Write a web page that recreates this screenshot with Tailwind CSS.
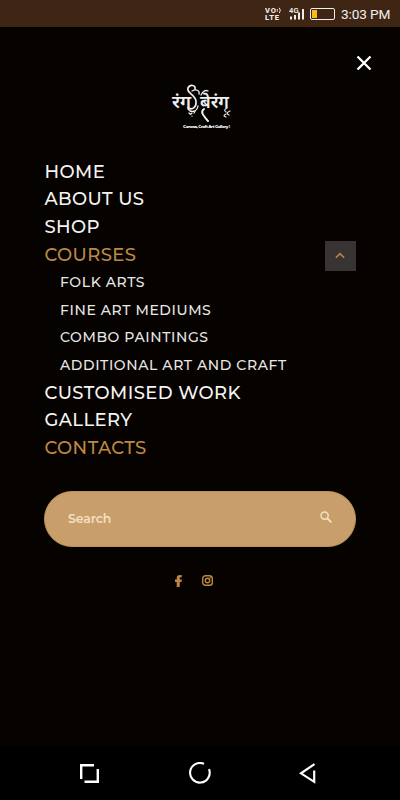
<!DOCTYPE html>
<html lang="en">
<head>
    <meta charset="UTF-8">
    <meta name="viewport" content="width=device-width, initial-scale=1.0">
    <title>Rang Berang</title>
    <script src="https://cdn.jsdelivr.net/npm/@tailwindcss/browser@4"></script>
</head>
<body class="bg-[#060200] font-['Montserrat','Inter',sans-serif] text-[#f5f4f3]">
    <div class="flex flex-col w-[400px] h-[800px] overflow-hidden">

        <!-- status bar -->
        <header class="flex h-[27px] shrink-0 items-center justify-end bg-[#3f2614] pr-[10px] font-['Roboto',sans-serif] text-[#f0eeec]">
            <svg class="w-[17px] h-[14px]" viewBox="0 0 17 14" fill="currentColor" font-size="7.5" font-weight="800">
                <text x="0" y="6" textLength="11">VO</text>
                <text x="0" y="13.300" textLength="14">LTE</text>
                <path fill="none" stroke="currentColor" d="M12 2q1 1.400 0 2.800M14.300 .8q2 2.600 0 5.200"/>
            </svg>
            <svg class="ml-[7px] w-[16px] h-[14px]" viewBox="0 0 16 14" fill="currentColor">
                <text x="0" y="6" font-size="7.5" font-weight="600" textLength="9.5">4G</text>
                <path d="M1 9.500h2V12.500H1zM5 8h2v4.500H5zM9 5.500h2v7H9zM13 2h2v10.500h-2z"/>
            </svg>
            <div class="ml-[5px] w-[25px] h-[12px] rounded-[2px] border border-[#f0eeec] p-px">
                <div class="w-[5px] h-full bg-[#fdb813]"></div>
            </div>
            <span class="ml-[6px] mt-px w-[49px] text-[13.7px] leading-[27px] tracking-[-0.15px] whitespace-nowrap">3:03 PM</span>
        </header>

        <main class="flex flex-col h-[719px] px-[44px]">
            <div class="flex justify-end pt-[28px] -mr-[16px]">
                <svg class="w-4 h-4" viewBox="0 0 16 16" stroke="#fff" stroke-width="2.3"><path d="M1.500 1.500l13 13M14.500 1.500l-13 13"/></svg>
            </div>

            <!-- logo -->
            <svg class="mt-[11px] ml-[124px] w-[66px] h-[50px] shrink-0" viewBox="0 0 66 50" fill="none" stroke="#f0f0f0" stroke-linecap="round">
                <g fill="#f0f0f0" stroke="none" font-family="'Noto Sans Devanagari','Noto Sans',sans-serif" font-weight="600">
                    <text x="4" y="26" font-size="17" textLength="19" lengthAdjust="spacingAndGlyphs">रंग</text>
                    <text x="32" y="26" font-size="17" textLength="29" lengthAdjust="spacingAndGlyphs">बेरंग</text>
                </g>
                <path stroke-width="1.7" d="M27 7C28 3 22 2 20 6c-2 5 7 6 8 13 .6 7-4 9-8 7"/>
                <path stroke-width="1.3" d="M24 9c4-2 8-1 7 3M20 27c3 4 9 3 10-3M33 13q3-6 7-4"/>
                <path stroke-width="2" d="M36 27c-4 3-1 6 4 12"/>
                <path stroke-width="1.200" d="M59 26q-4 2-1 4M62 29q-5 2-1 4M58 32q-4 2 0 3M21 31l1.500 1.500L24 31M26 31l1-1.500M24 34v.2"/>
                <text x="15" y="46" font-size="4.200" font-weight="800" textLength="47" fill="#fff" stroke="none" font-family="Montserrat, Inter, sans-serif">Canvas, Craft Art Gallery !</text>
            </svg>

            <nav class="mt-[26.5px] pl-[0.5px] text-[18px] font-medium leading-[27.7px] tracking-[0.4px] whitespace-nowrap">
                <div>HOME</div>
                <div>ABOUT US</div>
                <div>SHOP</div>
                <div class="flex items-center justify-between h-[27.7px] text-[#bd8844]">
                    <span>COURSES</span>
                    <button class="flex items-center justify-center w-[31px] h-[30px] mt-[2px] bg-[#383433]">
                        <svg class="w-[10px] h-[7px] -mt-px -ml-px" viewBox="0 0 10 7" fill="none" stroke="currentColor" stroke-width="1.5"><path d="M.8 5.800L5 1.600l4.200 4.200"/></svg>
                    </button>
                </div>
                <div class="pl-[15.5px] text-[14px] leading-[27.6px] tracking-[0.6px] text-[#e8e7e6]">
                    <div>FOLK ARTS</div>
                    <div>FINE ART MEDIUMS</div>
                    <div>COMBO PAINTINGS</div>
                    <div>ADDITIONAL ART AND CRAFT</div>
                </div>
                <div>CUSTOMISED WORK</div>
                <div>GALLERY</div>
                <div class="text-[#bd8844]">CONTACTS</div>
            </nav>

            <div class="flex items-center justify-between mt-[28px] h-[56px] shrink-0 rounded-full border border-[#bd9158] bg-[#c89f6a] px-[23px]">
                <span class="mt-px text-[12.5px] font-semibold tracking-[-0.1px] text-[#f4dfc2]">Search</span>
                <svg class="w-[12px] h-[12px] -mt-[4px]" viewBox="0 0 12 12" fill="none" stroke="#f6e3c8"><circle cx="4.6" cy="4.6" r="3.6" stroke-width="1.4"/><path stroke-width="1.8" d="M7.300 7.300l4 4"/></svg>
            </div>

            <!-- social links -->
            <div class="flex items-center mt-[28px] ml-[131px] gap-[20px] text-[#bd8844]">
                <svg class="w-[7px] h-[12px]" viewBox="0 0 7 12" fill="currentColor"><path d="M1.700 12V7H0V4.500h1.700V3Q1.700 0 4.800 0q1.200 0 2 .2v2H5.500Q4.700 2.200 4.700 3.200v1.300h2.200L6.500 7H4.700v5z"/></svg>
                <svg class="w-[11px] h-[11px]" viewBox="0 0 11 11" fill="none" stroke="currentColor" stroke-width="1.4"><rect x=".7" y=".7" width="9.600" height="9.600" rx="2.8"/><circle cx="5.5" cy="5.5" r="2.2"/><circle cx="8.3" cy="2.7" r=".7" fill="currentColor" stroke="none"/></svg>
            </div>
        </main>

        <!-- system navigation -->
        <footer class="flex h-[54px] shrink-0 items-center justify-between bg-black pl-[80px] pr-[84px]">
            <svg class="w-[19px] h-[19px]" viewBox="0 0 19 19" fill="none" stroke="#fff" stroke-width="2.4"><path d="M1.200 15V1.200H14M17.800 5v12.800H4.500"/></svg>
            <svg class="ml-[2px] w-[22px] h-[22px]" viewBox="0 0 22 22" fill="none" stroke="#fff" stroke-width="2.1"><path d="M15 1.900A9.800 9.800 0 1 0 20 7.200"/></svg>
            <svg class="w-[17px] h-[21px]" viewBox="0 0 17 21" fill="none" stroke="#fff" stroke-width="2.2"><path d="M15.500 1.200L2 10.300l13.200 8.500V7.500"/></svg>
        </footer>
    </div>
</body>
</html>
